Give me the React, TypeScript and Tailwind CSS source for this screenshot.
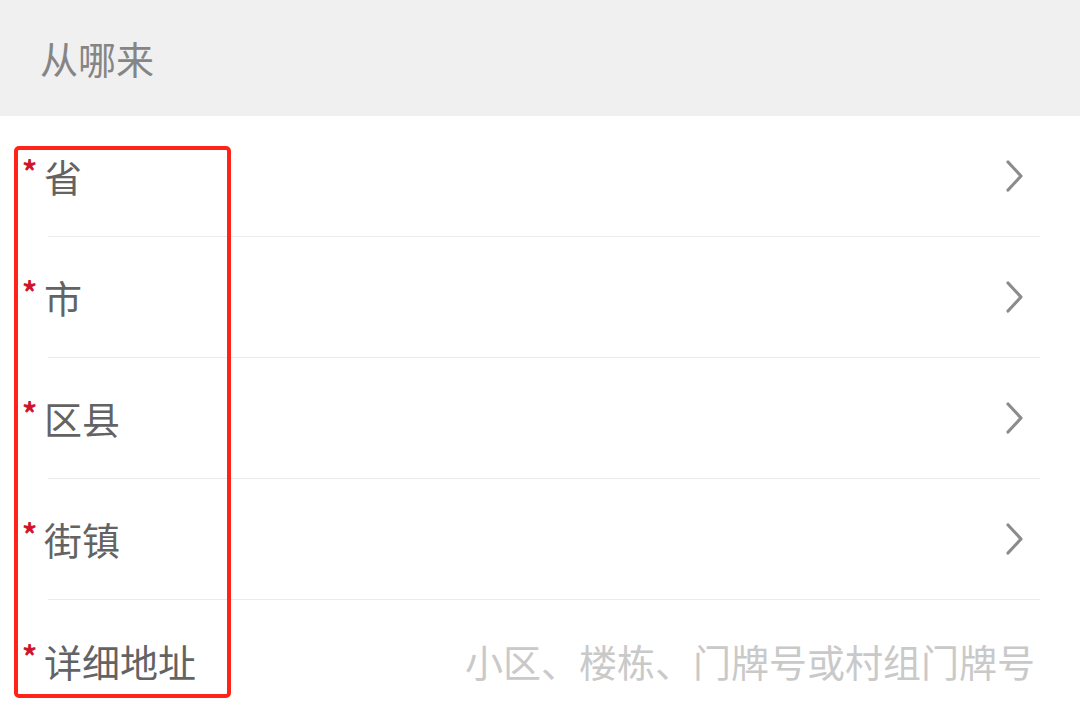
import React from 'react'

interface Field {
  id: string;
  label: string;
  placeholder?: string;
  arrow: boolean;
}

const fields: Field[] = [
  { id: 'province', label: '省', arrow: true },
  { id: 'city', label: '市', arrow: true },
  { id: 'district', label: '区县', arrow: true },
  { id: 'street', label: '街镇', arrow: true },
  { id: 'detail', label: '详细地址', placeholder: '小区、楼栋、门牌号或村组门牌号', arrow: false },
]

function Chevron() {
  return (
    <svg width="22" height="34" viewBox="0 0 22 34" fill="none" className="shrink-0">
      <polyline points="4,3 17,17 4,31" stroke="#8c8c8c" strokeWidth="3.2" strokeLinecap="round" strokeLinejoin="round" />
    </svg>
  )
}

export default function App() {
  return (
    <div className="relative w-[1080px] h-[720px] overflow-hidden bg-white" style={{ fontFamily: '"Noto Sans CJK SC", "Noto Sans", sans-serif' }}>
      <div className="h-[116px] bg-[#f0f0f0] flex items-center pl-[40px]">
        <span className="text-[38px] leading-none text-[#858585]">从哪来</span>
      </div>

      <div className="pl-[48px]">
        {fields.map((f, i) => (
          <div
            key={f.id}
            className={
              i < fields.length - 1
                ? 'h-[121px] mr-[40px] flex items-center border-b border-[#ececec]'
                : 'h-[121px] mr-[40px] flex items-center'
            }
          >
            <div className="flex items-start -ml-[28px]">
              <span className="w-[24px] pl-[2px] text-[30px] font-bold leading-none text-[#d0142c] -mt-[2px]">*</span>
              <span className="text-[38px] leading-none text-[#636363]">{f.label}</span>
            </div>
            <div className="flex-1" />
            {f.placeholder && (
              <span className="text-[38px] leading-none text-[#c9c9c9] mr-[5px]">{f.placeholder}</span>
            )}
            {f.arrow && (
              <div className="mr-[14px]">
                <Chevron />
              </div>
            )}
          </div>
        ))}
      </div>

      {/* red annotation box */}
      <div className="absolute left-[14px] top-[146px] w-[217px] h-[552px] border-[4px] border-[#ff2318] rounded-[5px]" />
    </div>
  )
}
